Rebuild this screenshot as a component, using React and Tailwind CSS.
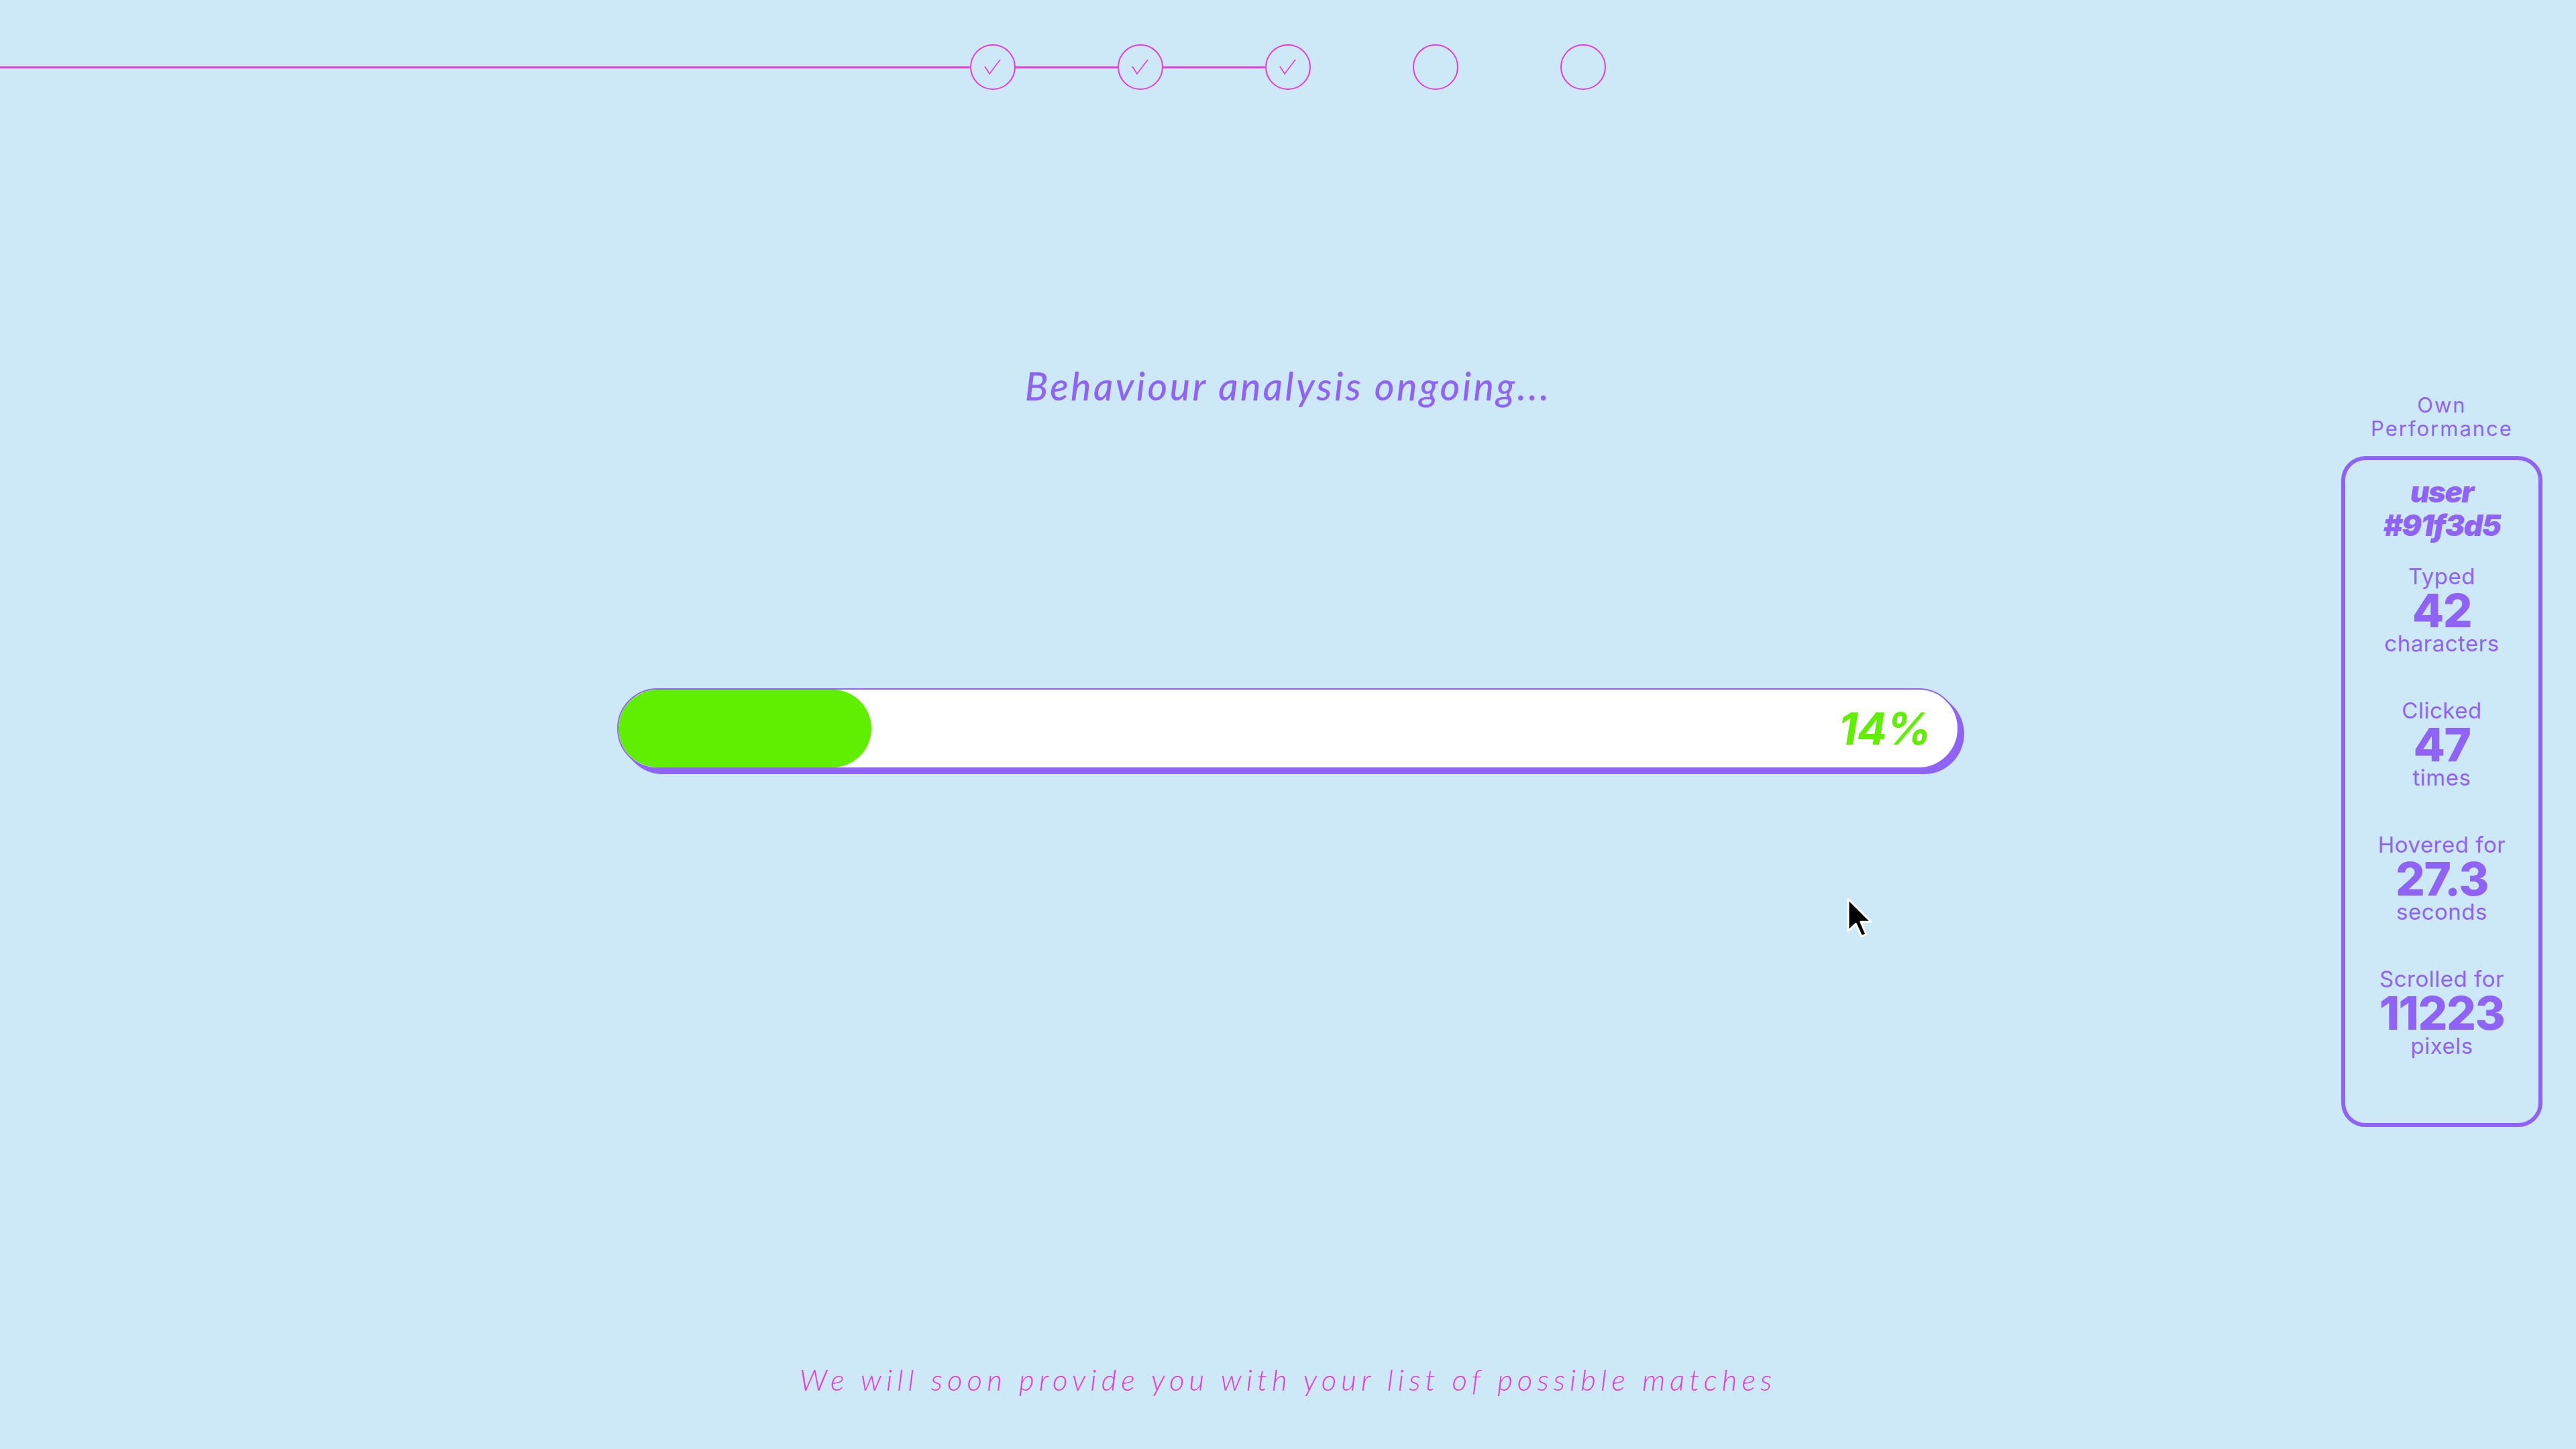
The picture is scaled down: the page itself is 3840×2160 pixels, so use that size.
import React from "react";

const steps = [
  { done: true },
  { done: true },
  { done: true },
  { done: false },
  { done: false },
];

const stats = [
  { label: "Typed", value: "42", unit: "characters" },
  { label: "Clicked", value: "47", unit: "times" },
  { label: "Hovered for", value: "27.3", unit: "seconds" },
  { label: "Scrolled for", value: "11223", unit: "pixels" },
];

function Check() {
  return (
    <svg width="30" height="26" viewBox="0 0 30 26" fill="none">
      <path d="M3 12 L10 23 L26 2" stroke="#e23ddb" strokeWidth="1.6" />
    </svg>
  );
}

function Stepper() {
  return (
    <div className="flex items-center pt-[66px]">
      <div className="flex-1 h-[3px] bg-[#e23ddb]" />
      {steps.map((s, i) => (
        <React.Fragment key={i}>
          <div className="w-[68px] h-[68px] rounded-full border-2 border-[#e23ddb] flex items-center justify-center">
            {s.done && <Check />}
          </div>
          {i < steps.length - 1 && (
            <div
              className={
                i < 2 ? "w-[152px] h-[3px] bg-[#e23ddb]" : "w-[152px] h-[3px]"
              }
            />
          )}
        </React.Fragment>
      ))}
      <div className="flex-1" />
    </div>
  );
}

function ProgressBar() {
  return (
    <div className="w-[2000px] h-[120px] mx-auto rounded-full border-2 border-[#8f63f5] bg-white shadow-[8px_8px_0_#8f63f5] flex items-center overflow-hidden">
      <div className="w-[377px] h-full rounded-full bg-[#60ef00]" />
      <div className="flex-1 text-right pr-[40px] font-['Inter',sans-serif] italic font-bold text-[66px] leading-none text-[#60ef00] tracking-[-1px]">
        14%
      </div>
    </div>
  );
}

function Performance() {
  return (
    <div className="absolute right-[50px] top-[586px] w-[300px] flex flex-col items-center text-[#8f63f5] font-['Inter',sans-serif]">
      <p className="text-center text-[31px] leading-[35px] tracking-[2px]">
        Own
        <br />
        Performance
      </p>
      <div className="mt-[24px] w-[300px] h-[1000px] border-[6px] border-[#8f63f5] rounded-[36px] flex flex-col items-center pt-[22px]">
        <p className="text-center italic font-black text-[44px] leading-[50px] tracking-[-1.5px]">
          user
          <br />
          #91f3d5
        </p>
        <div className="mt-[33px] flex flex-col gap-[66px]">
          {stats.map((s) => (
            <div key={s.label} className="flex flex-col items-center">
              <span className="text-[33px] leading-[36px] tracking-[0.5px]">
                {s.label}
              </span>
              <span className="font-extrabold text-[69px] leading-[67px] tracking-[-1.5px]">
                {s.value}
              </span>
              <span className="text-[33px] leading-[31px] tracking-[0.5px]">
                {s.unit}
              </span>
            </div>
          ))}
        </div>
      </div>
    </div>
  );
}

function Cursor() {
  return (
    <svg
      className="absolute left-[2752px] top-[1337px]"
      width="39"
      height="63"
      viewBox="0 0 13 21"
    >
      <path
        d="M1 1 V17 L4.8 13.4 L7.6 19.6 L10 18.6 L7.3 12.4 H12.4 Z"
        fill="#000"
        stroke="#fff"
        strokeWidth="1"
        strokeLinejoin="round"
      />
    </svg>
  );
}

export default function App() {
  return (
    <div className="relative w-full h-[2160px] bg-[#cde9f8] overflow-hidden flex flex-col">
      <Stepper />
      <h1 className="mt-[407px] text-center font-['Lato',sans-serif] italic font-medium text-[57px] leading-[68px] text-[#8f63f5] tracking-[3.5px]">
        Behaviour analysis ongoing...
      </h1>
      <div className="mt-[417px]">
        <ProgressBar />
      </div>
      <p className="mt-auto pb-[78px] text-center font-['Lato',sans-serif] italic font-light text-[44px] leading-[52px] text-[#e23ddb] tracking-[7px]">
        We will soon provide you with your list of possible matches
      </p>
      <Performance />
      <Cursor />
    </div>
  );
}
